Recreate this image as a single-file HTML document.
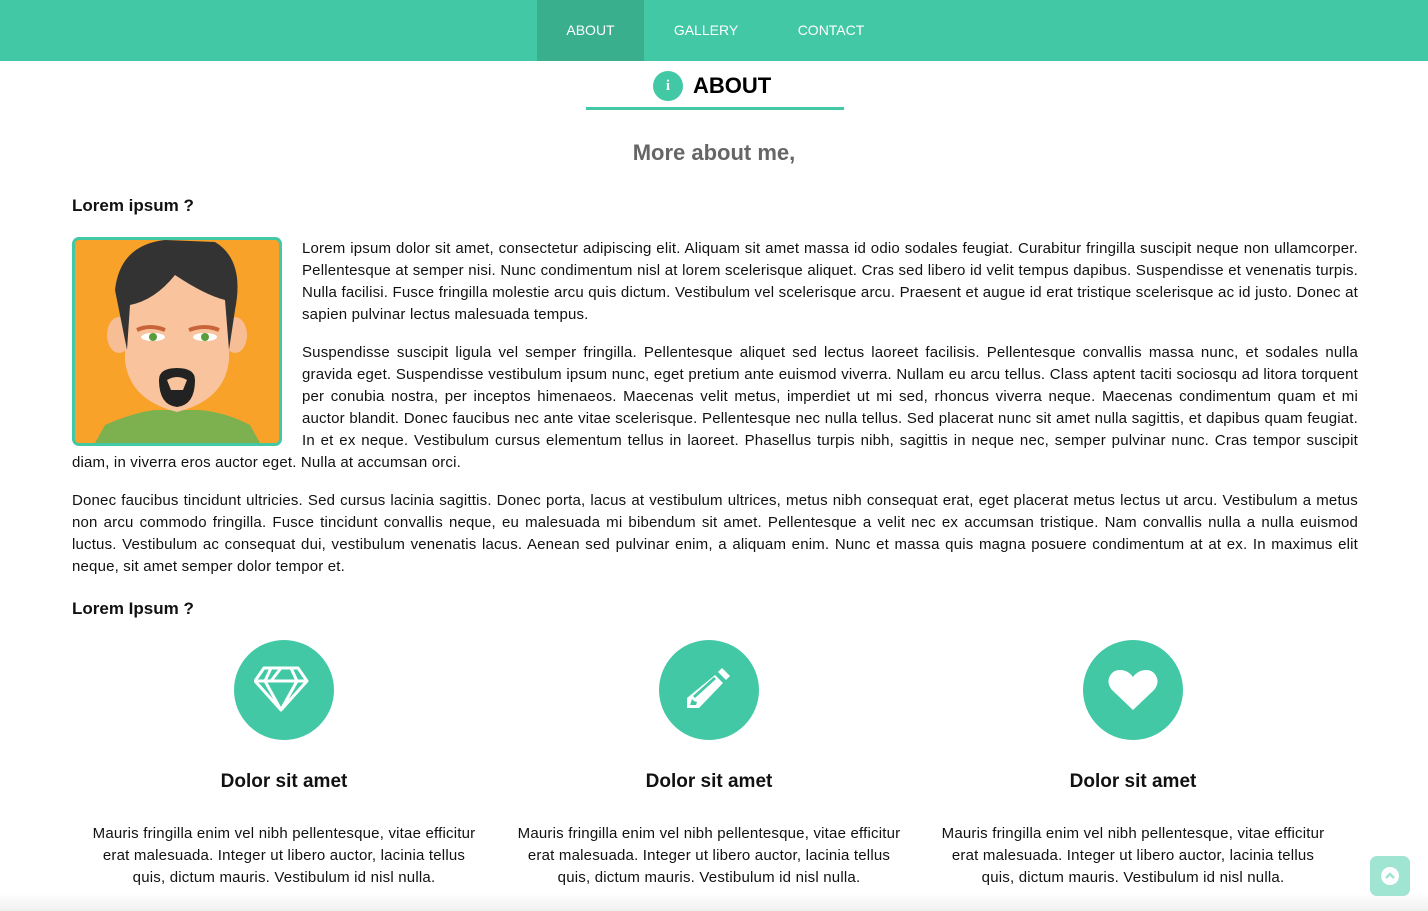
<!DOCTYPE html>
<html><head><meta charset="utf-8"><style>
*{box-sizing:border-box;margin:0;padding:0}
body{width:1428px;height:911px;overflow:hidden;background:#fff;font-family:"Liberation Sans",sans-serif;color:#111;position:relative}
nav{height:61px;background:#42c8a5;position:relative}
nav a{position:absolute;top:0;height:61px;line-height:61px;color:#fff;font-size:14px;text-decoration:none;text-align:center}
.wrap{position:absolute;left:72px;width:1286px}
h2{font-size:17px;font-weight:bold;color:#111}
p.j{font-size:15px;line-height:22px;text-align:justify;letter-spacing:0.18px}
.col{position:absolute;top:640px;width:400px;text-align:center}
.circ{width:100px;height:100px;border-radius:50%;background:#42c8a5;margin:0 auto;display:flex;align-items:center;justify-content:center}
.col h3{font-size:19px;font-weight:bold;margin-top:31px;height:24px}
.col p{font-size:15px;line-height:22px;margin:28px auto 0;letter-spacing:0.2px;width:390px}
</style></head><body>
<nav>
<a style="left:537px;width:107px;background:#3aaf8e">ABOUT</a>
<a style="left:660px;width:92px">GALLERY</a>
<a style="left:785px;width:92px">CONTACT</a>
</nav>
<div style="position:absolute;left:653px;top:71px;width:30px;height:30px;border-radius:50%;background:#42c8a5;color:#fff;font:bold 15px 'Liberation Serif',serif;text-align:center;line-height:30px">i</div>
<div style="position:absolute;left:693px;top:73px;font-size:22px;font-weight:bold;color:#000">ABOUT</div>
<div style="position:absolute;left:586px;top:107px;width:258px;height:3px;background:#42c8a5"></div>
<div style="position:absolute;left:0;width:1428px;top:140px;text-align:center;font-size:22px;font-weight:bold;color:#666">More about me,</div>
<div class="wrap" style="top:196px">
<h2>Lorem ipsum ?</h2>
<div style="float:left;width:210px;height:209px;margin:21px 20px 4px 0;border:3px solid #42c8a5;border-radius:7px;overflow:hidden;background:#f8a22a">
<svg width="204" height="203" viewBox="0 0 204 203">
<path d="M20 203 L30 185 Q60 172 80 170 L124 170 Q150 172 175 185 L185 203Z" fill="#7db04f"/>
<ellipse cx="44" cy="95" rx="12" ry="18" fill="#f7bd94"/><ellipse cx="160" cy="95" rx="12" ry="18" fill="#f7bd94"/>
<path d="M50 50 Q50 20 102 20 Q154 20 154 60 L154 120 Q150 160 102 172 Q54 160 50 120Z" fill="#f9c49d"/>
<path d="M40 50 Q45 5 90 0 L140 2 Q170 20 160 70 L154 110 L150 60 Q130 55 100 35 Q80 60 55 65 L52 110Z" fill="#333"/>
<path d="M62 90 Q75 84 90 90" stroke="#c9643a" stroke-width="4" fill="none"/><path d="M114 90 Q130 84 144 90" stroke="#c9643a" stroke-width="4" fill="none"/>
<ellipse cx="78" cy="97" rx="12" ry="4" fill="#fff"/><circle cx="78" cy="97" r="4" fill="#5a9e3c"/>
<ellipse cx="130" cy="97" rx="12" ry="4" fill="#fff"/><circle cx="130" cy="97" r="4" fill="#5a9e3c"/>
<path d="M84 140 Q84 128 102 128 Q120 128 120 140 Q120 165 102 167 Q84 165 84 140Z M92 140 Q102 134 112 140 L108 150 L96 150Z" fill="#222" fill-rule="evenodd"/>
</svg></div>
<p class="j" style="margin-top:22px">Lorem ipsum dolor sit amet, consectetur adipiscing elit. Aliquam sit amet massa id odio sodales feugiat. Curabitur fringilla suscipit neque non ullamcorper. Pellentesque at semper nisi. Nunc condimentum nisl at lorem scelerisque aliquet. Cras sed libero id velit tempus dapibus. Suspendisse et venenatis turpis. Nulla facilisi. Fusce fringilla molestie arcu quis dictum. Vestibulum vel scelerisque arcu. Praesent et augue id erat tristique scelerisque ac id justo. Donec at sapien pulvinar lectus malesuada tempus.</p>
<p class="j" style="margin-top:16px">Suspendisse suscipit ligula vel semper fringilla. Pellentesque aliquet sed lectus laoreet facilisis. Pellentesque convallis massa nunc, et sodales nulla gravida eget. Suspendisse vestibulum ipsum nunc, eget pretium ante euismod viverra. Nullam eu arcu tellus. Class aptent taciti sociosqu ad litora torquent per conubia nostra, per inceptos himenaeos. Maecenas velit metus, imperdiet ut mi sed, rhoncus viverra neque. Maecenas condimentum quam et mi auctor blandit. Donec faucibus nec ante vitae scelerisque. Pellentesque nec nulla tellus. Sed placerat nunc sit amet nulla sagittis, et dapibus quam feugiat. In et ex neque. Vestibulum cursus elementum tellus in laoreet. Phasellus turpis nibh, sagittis in neque nec, semper pulvinar nunc. Cras tempor suscipit diam, in viverra eros auctor eget. Nulla at accumsan orci.</p>
<p class="j" style="margin-top:16px;clear:both">Donec faucibus tincidunt ultricies. Sed cursus lacinia sagittis. Donec porta, lacus at vestibulum ultrices, metus nibh consequat erat, eget placerat metus lectus ut arcu. Vestibulum a metus non arcu commodo fringilla. Fusce tincidunt convallis neque, eu malesuada mi bibendum sit amet. Pellentesque a velit nec ex accumsan tristique. Nam convallis nulla a nulla euismod luctus. Vestibulum ac consequat dui, vestibulum venenatis lacus. Aenean sed pulvinar enim, a aliquam enim. Nunc et massa quis magna posuere condimentum at at ex. In maximus elit neque, sit amet semper dolor tempor et.</p>
</div>
<div class="wrap" style="top:599px"><h2>Lorem Ipsum ?</h2></div>
<div class="col" style="left:84px"><div class="circ"><svg width="60" height="50" viewBox="0 0 60 50"><g fill="none" stroke="#fff" stroke-width="3" stroke-linejoin="round"><path d="M10 3 H44 L53 16 L27 45 L1 16Z M1 16 H53 M17 3 L11 16 L27 45 L43 16 L37 3 M17 16 L27 3"/></g></svg></div><h3>Dolor sit amet</h3><p>Mauris fringilla enim vel nibh pellentesque, vitae efficitur erat malesuada. Integer ut libero auctor, lacinia tellus quis, dictum mauris. Vestibulum id nisl nulla.</p></div>
<div class="col" style="left:509px"><div class="circ"><svg width="50" height="50" viewBox="0 0 50 50"><g fill="#fff"><path d="M38 3 L46 11 L42 15 L34 7Z"/><path d="M31 10 L39 18 L15 43 L3 43 L3 33Z M8 34 L6 40 L12 40 L13 37 L10 36Z M9 31 L30 12 L32 14 L11 33Z" fill-rule="evenodd"/></g></svg></div><h3>Dolor sit amet</h3><p>Mauris fringilla enim vel nibh pellentesque, vitae efficitur erat malesuada. Integer ut libero auctor, lacinia tellus quis, dictum mauris. Vestibulum id nisl nulla.</p></div>
<div class="col" style="left:933px"><div class="circ"><svg width="52" height="44" viewBox="0 0 52 44"><path d="M26 42 L5 22 Q0 16 2 10 Q5 2 13 2 Q21 2 26 9 Q31 2 39 2 Q47 2 50 10 Q52 16 47 22Z" fill="#fff"/></svg></div><h3>Dolor sit amet</h3><p>Mauris fringilla enim vel nibh pellentesque, vitae efficitur erat malesuada. Integer ut libero auctor, lacinia tellus quis, dictum mauris. Vestibulum id nisl nulla.</p></div>
<div style="position:absolute;left:0;top:893px;width:1428px;height:18px;background:linear-gradient(#fff,#f0f0f0)"></div>
<div style="position:absolute;left:1370px;top:856px;width:40px;height:40px;border-radius:7px;background:#a0e4d2;display:flex;align-items:center;justify-content:center"><svg width="18" height="18" viewBox="0 0 18 18"><circle cx="9" cy="9" r="9" fill="#fff"/><path d="M5 11 L9 7 L13 11" stroke="#a0e4d2" stroke-width="2.5" fill="none"/></svg></div>
</body></html>
